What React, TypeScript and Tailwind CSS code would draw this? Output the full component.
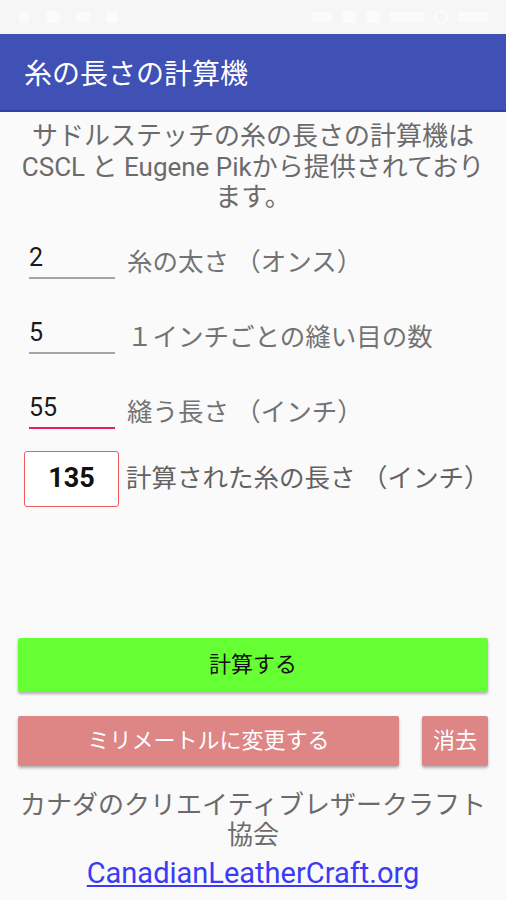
import React from 'react';

const font = { fontFamily: 'Roboto, "Noto Sans CJK JP", sans-serif' };

const Field = ({ value, active }: { value: string; active?: boolean }) => (
  <div
    className={`mx-[5px] flex h-[40px] w-[86px] items-center border-b-2 text-[25px] text-[#1a1a1a] ${
      active ? 'border-[#e91e63]' : 'border-[#a5a5a5]'
    }`}
  >
    {value}
  </div>
);

const StatusBar = () => (
  <div className="flex h-[34px] items-center justify-between bg-[#f6f6f6] px-[18px] shadow-[0_1px_2px_rgba(0,0,0,0.12)]">
    <div className="flex items-center gap-[16px] opacity-60">
      <span className="h-[12px] w-[12px] rounded-full bg-white" />
      <span className="h-[12px] w-[14px] rounded-sm bg-white" />
      <span className="h-[10px] w-[14px] bg-white" />
      <span className="h-[12px] w-[12px] rounded-sm bg-white" />
    </div>
    <div className="flex items-center gap-[10px] opacity-60">
      <span className="h-[10px] w-[20px] bg-white" />
      <span className="h-[12px] w-[14px] bg-white" />
      <span className="h-[12px] w-[14px] bg-white" />
      <span className="h-[10px] w-[34px] bg-white" />
      <span className="h-[14px] w-[14px] rounded-full border-2 border-white" />
      <span className="h-[10px] w-[30px] bg-white" />
    </div>
  </div>
);

const Row = ({ children }: { children: React.ReactNode }) => (
  <div className="flex h-[40px] items-center">{children}</div>
);

export default function App() {
  return (
    <div className="flex h-[900px] w-[506px] flex-col overflow-hidden bg-[#fafafa]" style={font}>
      <StatusBar />
      <header className="flex h-[78px] items-center border-b-2 border-[#2f40a8] bg-[#3f51b5] px-[24px] pt-[6px]">
        <h1 className="text-[28px] text-white">糸の長さの計算機</h1>
      </header>

      <p className="mt-[9px] px-[20px] text-center text-[26px] leading-[30.5px] text-[#6b6b6b]">
        サドルステッチの糸の長さの計算機はCSCL と Eugene Pikから提供されております。
      </p>

      <div className="mt-[26px] flex flex-col px-[24px]">
        <Row>
          <Field value="2" />
          <span className="ml-[7px] mt-[8px] text-[25.5px] text-[#737373]">糸の太さ （オンス）</span>
        </Row>
        <div className="mt-[35px]">
          <Row>
            <Field value="5" />
            <span className="ml-[7px] mt-[8px] text-[25.5px] text-[#737373]">１インチごとの縫い目の数</span>
          </Row>
        </div>
        <div className="mt-[35px]">
          <Row>
            <Field value="55" active />
            <span className="ml-[7px] mt-[8px] text-[25.5px] text-[#737373]">縫う長さ （インチ）</span>
          </Row>
        </div>
        <div className="mt-[22px] flex items-center">
          <div className="flex h-[56px] w-[97px] items-center justify-center rounded-[3px] border border-[#f05a5a] bg-white text-[27px] font-bold text-[#111]">
            135
          </div>
          <span className="ml-[7px] text-[25.5px] text-[#626262]">計算された糸の長さ （インチ）</span>
        </div>
      </div>

      <div className="mt-[131px] flex flex-col px-[18px]">
        <button className="flex h-[54px] w-full items-center justify-center rounded-[2px] bg-[#66ff33] text-[22px] text-[#111] shadow-[0_2px_3px_rgba(0,0,0,0.3)]">
          計算する
        </button>
        <div className="mt-[24px] flex gap-[23px]">
          <button className="flex h-[50px] w-[381px] items-center justify-center rounded-[2px] bg-[#de8585] text-[22px] text-white shadow-[0_2px_3px_rgba(0,0,0,0.3)]">
            ミリメートルに変更する
          </button>
          <button className="flex h-[50px] flex-1 items-center justify-center rounded-[2px] bg-[#de8585] text-[22px] text-white shadow-[0_2px_3px_rgba(0,0,0,0.3)]">
            消去
          </button>
        </div>
      </div>

      <div className="mt-[24px] flex flex-col items-center px-[16px] text-center">
        <p className="text-[26px] leading-[30px] text-[#6b6b6b]">カナダのクリエイティブレザークラフト協会</p>
        <a href="#" className="mt-[5px] text-[29px] leading-[36px] text-[#3b3bf5] underline">
          CanadianLeatherCraft.org
        </a>
      </div>
    </div>
  );
}
